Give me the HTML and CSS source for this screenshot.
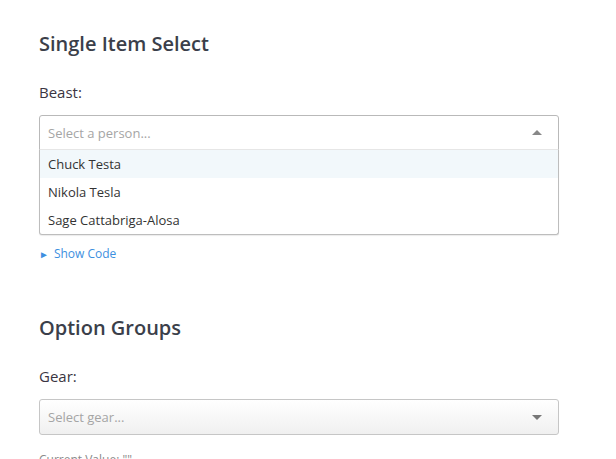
FILE: index.html
```html
<!DOCTYPE html>
<html>
<head>
<meta charset="utf-8">
<link rel="stylesheet" href="styles.css">
</head>
<body>
<div class="page">
  <section class="section first">
    <h3 class="title">Single Item Select</h3>
    <div class="label">Beast:</div>
    <div class="select is-open">
      <div class="control">
        <span class="placeholder">Select a person...</span>
        <span class="arrow up"></span>
      </div>
      <div class="menu">
        <div class="option focused">Chuck Testa</div>
        <div class="option">Nikola Tesla</div>
        <div class="option">Sage Cattabriga-Alosa</div>
      </div>
    </div>
    <a class="show-code"><span class="tri">&#9658;</span>Show Code</a>
  </section>
  <section class="section second">
    <h3 class="title">Option Groups</h3>
    <div class="label">Gear:</div>
    <div class="select">
      <div class="control grad">
        <span class="placeholder">Select gear...</span>
        <span class="arrow down"></span>
      </div>
    </div>
    <div class="hint">Current Value: ""</div>
  </section>
</div>
</body>
</html>
```

FILE: styles.css
```css
html, body {
  margin: 0;
  padding: 0;
  background: #fff;
}
body {
  font-family: "Open Sans", "Liberation Sans", sans-serif;
  color: #333;
  overflow: hidden;
  height: 459px;
}
.page {
  width: 520px;
  padding: 0 0 0 39px;
}
.section.first {
  padding-top: 32px;
}
.section.second {
  padding-top: 54px;
}
.title {
  margin: 0;
  font-size: 20px;
  line-height: 24px;
  font-weight: 600;
  color: #3b3f4a;
}
.label {
  margin-top: 26px;
  font-size: 15px;
  line-height: 20px;
  color: #3a3542;
}
.select {
  position: relative;
  margin-top: 13px;
}
.control {
  box-sizing: border-box;
  height: 35px;
  border: 1px solid #c6c6c6;
  border-radius: 3px;
  background: #fff;
  display: flex;
  align-items: center;
  padding: 0 16px 0 8px;
}
.is-open .control {
  border-color: #b9b9b9;
  border-bottom-left-radius: 0;
  border-bottom-right-radius: 0;
}
.control.grad {
  height: 36px;
  background: linear-gradient(#ffffff, #f0f0f0);
}
.placeholder {
  flex: 1;
  font-size: 13px;
  color: #a5a5a5;
}
.arrow {
  width: 0;
  height: 0;
  border-left: 5px solid transparent;
  border-right: 5px solid transparent;
}
.arrow.up {
  border-bottom: 5px solid #888;
}
.arrow.down {
  border-top: 5px solid #777;
}
.menu {
  position: absolute;
  left: 0;
  right: 0;
  top: 34px;
  background: #fff;
  border: 1px solid #bdbdbd;
  border-top-color: #e6e6e6;
  border-radius: 0 0 3px 3px;
  box-shadow: 0 1px 1px rgba(0, 0, 0, 0.08);
  z-index: 2;
}
.option {
  height: 28px;
  line-height: 28px;
  padding: 0 8px;
  font-size: 13px;
  color: #333;
}
.option.focused {
  background: #f2f8fb;
}
.hint {
  margin-top: 17px;
  font-size: 12px;
  line-height: 16px;
  color: #8a8a8a;
}
.show-code {
  display: flex;
  align-items: center;
  margin-top: 96px;
  font-size: 12px;
  line-height: 16px;
  color: #3d8fe0;
}
.tri {
  font-size: 10px;
  margin-right: 5px;
}
```
